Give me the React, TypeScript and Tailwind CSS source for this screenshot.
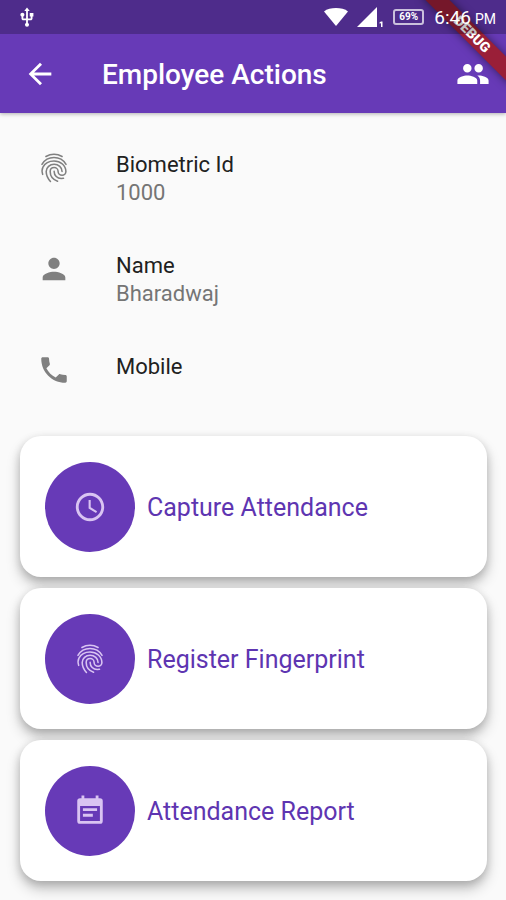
import React from 'react';
import {
  MdAccessTime,
  MdArrowBack,
  MdPeople,
  MdPerson,
  MdPhone,
  MdUsb,
} from 'react-icons/md';

type IconComponent = React.ComponentType<{ className?: string }>;

interface Detail {
  label: string;
  value?: string;
  icon: IconComponent;
}

interface Action {
  label: string;
  icon: IconComponent;
}

const ReportIcon: IconComponent = ({ className }) => (
  <svg viewBox="0 0 24 24" className={className} fill="currentColor" fillRule="evenodd">
    <path d="M6 1h2v2h8V1h2v2h1a2 2 0 0 1 2 2v14a2 2 0 0 1-2 2H5a2 2 0 0 1-2-2V5a2 2 0 0 1 2-2h1zM5 8.500V19h14V8.500zM7 10h10v2H7zM7 14h7v2H7z" />
  </svg>
);

const FingerprintIcon: IconComponent = ({ className }) => (
  <svg
    viewBox="0 0 24 24"
    className={className}
    fill="none"
    stroke="currentColor"
    strokeWidth="1.1"
    strokeLinecap="round"
  >
    <path d="M6.3 3.900C8 2.900 9.900 2.300 12 2.300s4 .6 5.700 1.600" />
    <path d="M3.500 9.400C5.300 6.400 8.400 4.600 12 4.600s6.700 1.800 8.500 4.800" />
    <path d="M4 16.500c-.6-2-.6-3.700.2-5.200C5.600 8.600 8.600 7 12 7c4.600 0 8.400 3.400 8.400 7.400 0 1.500-1.200 2.700-2.700 2.700s-2.800-1.200-2.800-2.700-1.200-2.700-2.800-2.700-2.800 1.200-2.800 2.800c0 3 1.900 5.700 5.200 6.800" />
    <path d="M9.500 21.500C7.600 19.500 6.500 17.300 6.500 14.500c0-2.800 2.500-5.100 5.600-5.100s5.600 2.300 5.600 5" />
    <path d="M12.100 14.400c0 2.800 2.200 5 5 5 .6 0 1.100 0 1.600-.1" />
  </svg>
);

const details: Detail[] = [
  { label: 'Biometric Id', value: '1000', icon: FingerprintIcon },
  { label: 'Name', value: 'Bharadwaj', icon: MdPerson },
  { label: 'Mobile', icon: MdPhone },
];

const actions: Action[] = [
  { label: 'Capture Attendance', icon: MdAccessTime },
  { label: 'Register Fingerprint', icon: FingerprintIcon },
  { label: 'Attendance Report', icon: ReportIcon },
];

const StatusBar: React.FC = () => (
  <div className="relative z-10 flex h-[34px] items-center justify-between bg-black/24 pl-4 pr-[10px]">
    <MdUsb className="h-[23px] w-[22px]" />
    <div className="flex items-center">
      <svg viewBox="0 0 26 20" className="mr-2 h-5 w-[26px]" fill="currentColor">
        <path d="M13 19 1 4.500C4 1.900 8.500 1 13 1s9 .9 12 3.500z" />
      </svg>
      <svg viewBox="0 0 26 20" className="mr-[10px] h-5 w-[26px]" fill="currentColor">
        <path d="M0 20 20 0v20zM22.500 15.500l1.500-1h1.500V20H24v-3.800l-1.500.3z" />
      </svg>
      <div className="mr-[10px] flex h-4 w-[31px] items-center justify-center rounded-[3px] border-2 border-white/70 text-[10px] leading-none font-bold">
        69%
      </div>
      <span className="text-[19px] leading-none">6:46</span>
      <span className="ml-1 pt-1 text-[14px] leading-none">PM</span>
    </div>
  </div>
);

const DebugBanner: React.FC = () => (
  <div className="pointer-events-none absolute top-0 right-0 h-24 w-24 overflow-hidden">
    <div className="absolute top-[26px] left-0 h-[17px] w-[124px] rotate-45 bg-[#9a1f38] text-center text-[14px] leading-[17px] font-black shadow-[0_0_8px_rgba(0,0,0,0.5)]">
      DEBUG
    </div>
  </div>
);

const DetailRow: React.FC<Detail> = ({ label, value, icon: Icon }) => (
  <div className="flex min-h-14 items-start">
    <Icon className="mr-[45px] h-[34px] w-[34px] text-[#808080]" />
    <dl className="text-[22px] leading-7">
      <dt className="text-[#212121]">{label}</dt>
      {value && <dd className="text-[#757575]">{value}</dd>}
    </dl>
  </div>
);

const ActionCard: React.FC<Action> = ({ label, icon: Icon }) => (
  <button
    type="button"
    className="flex h-[141px] w-full items-center gap-3 rounded-[21px] bg-white px-[25px] text-left text-[25px] text-[#5e35b1] shadow-[0_8px_14px_rgba(0,0,0,0.22),0_3px_8px_rgba(0,0,0,0.16)]"
  >
    <span className="flex h-[90px] w-[90px] shrink-0 items-center justify-center rounded-full bg-[#673ab7]">
      <Icon className="h-[34px] w-[34px] text-[#d9c4f2]" />
    </span>
    <span className="pt-0.5">{label}</span>
  </button>
);

export default function App() {
  return (
    <div className="min-h-screen bg-[#fafafa] font-['Roboto',sans-serif]">
      <header className="relative bg-[#673ab7] text-white shadow-[0_1px_4px_rgba(0,0,0,0.3)]">
        <DebugBanner />
        <StatusBar />
        <div className="flex h-[79px] items-center pr-4 pl-[23px]">
          <button type="button" aria-label="Back">
            <MdArrowBack className="h-[34px] w-[34px]" />
          </button>
          <h1 className="ml-[45px] flex-1 pt-0.5 text-[28px] font-medium">Employee Actions</h1>
          <button type="button" aria-label="Employees">
            <MdPeople className="h-[34px] w-[34px]" />
          </button>
        </div>
      </header>

      <main className="pt-[38px] pb-[19px]">
        <div className="flex flex-col gap-[45px] px-[37px]">
          {details.map((detail) => (
            <DetailRow key={detail.label} {...detail} />
          ))}
        </div>
        <div className="mt-[27px] flex flex-col gap-[11px] pr-[19px] pl-5">
          {actions.map((action) => (
            <ActionCard key={action.label} {...action} />
          ))}
        </div>
      </main>
    </div>
  );
}
